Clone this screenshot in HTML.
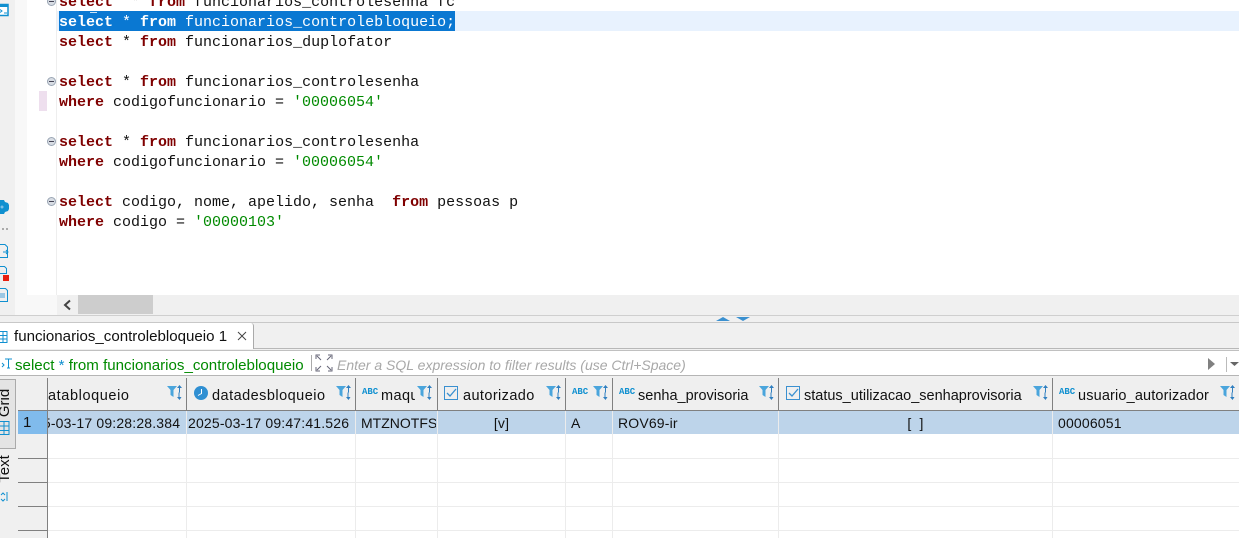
<!DOCTYPE html>
<html><head><meta charset="utf-8">
<style>
html,body{margin:0;padding:0;width:1239px;height:538px;overflow:hidden;background:#f0f0f0}
body{position:relative;font-family:"Liberation Sans",sans-serif;color:#111}
div,span.a,svg{position:absolute}
.l{position:absolute;left:59px;height:20px;font:15px/20px "Liberation Mono",monospace;white-space:pre;color:#111}
.l b{color:#7f0000;font-weight:bold}
.l i{font-style:normal;color:#008a00}
.fold{width:9px;height:9px;box-sizing:border-box;border-radius:50%;background:#d8dde4;border:1px solid #9aa6b4;left:47px}
.fold:after{content:"";position:absolute;left:1px;top:3px;width:5px;height:1px;background:#445}
.h{position:absolute;top:380px;height:31px;line-height:33px;font-size:14.5px;white-space:pre;color:#111}
.c{position:absolute;top:411px;height:23px;line-height:24px;font-size:14px;letter-spacing:.17px;white-space:pre;color:#111}
.v{position:absolute;width:1px;top:378px;height:32px;background:#808080}
.w{position:absolute;width:1px;top:411px;height:127px;background:#ececec}
.abc{position:absolute;top:388px;font:bold 9px/9px "Liberation Mono",monospace;color:#1090d0}
</style></head><body>
<div style="left:0;top:0;width:15px;height:295px;background:#f0f0f0"></div>
<div style="left:15px;top:0;width:12px;height:315px;background:#f8f8f8"></div>
<div style="left:27px;top:295px;width:30px;height:20px;background:#f8f8f8"></div>
<div style="left:27px;top:0;width:1212px;height:295px;background:#fff"></div>
<div style="left:56px;top:0;width:1px;height:295px;background:#eeeeee"></div>
<div style="left:57px;top:11px;width:1182px;height:20px;background:#e8f2fe"></div>
<div style="left:59px;top:11px;width:396px;height:20px;background:#0a78d2"></div>
<div style="left:39px;top:91px;width:8px;height:20px;background:#eedfee"></div>
<div style="left:90px;top:12px;width:7px;height:1px;background:#cfe4f6"></div>

<svg style="left:0;top:3px" width="10" height="14"><rect x="-2" y="1.500" width="10" height="11" fill="#fff" stroke="#1090d0" stroke-width="1.500"/><rect x="0" y="1" width="8" height="3" fill="#1090d0"/><path d="M0 6.500l2 1.500-2 1.500M4 10h3" fill="none" stroke="#1090d0"/></svg>
<svg style="left:0;top:199px" width="10" height="16"><path d="M-1 1h5l1 2 3 1 1 2v4l-1 2-3 1-1 2h-5z" fill="#1090d0"/><circle cx="2" cy="8" r="1.500" fill="#7cc0e8"/></svg>
<div style="left:2px;top:228px;width:2px;height:2px;background:#aaa"></div><div style="left:6px;top:228px;width:2px;height:2px;background:#aaa"></div>
<svg style="left:0;top:243px" width="10" height="60"><path d="M0 1.500h5l2.500 2.500v10.500H0M3 9h5M6 7l2 2-2 2" fill="none" stroke="#1090d0"/><path d="M0 23.500h4.500l2 2v5H0" fill="none" stroke="#1090d0"/><rect x="3" y="32" width="6" height="6" fill="#e82010"/><path d="M0 45.500h5.500l2 2v11H0" fill="none" stroke="#1090d0"/><rect x="0" y="50" width="5" height="5" fill="#9cc8e4"/></svg>

<div class="fold" style="top:-3px"></div>
<div class="fold" style="top:77px"></div>
<div class="fold" style="top:137px"></div>
<div class="fold" style="top:197px"></div>

<span class="l" style="top:-7px"><b>select</b>  * <b>from</b> funcionarios_controlesenha fc</span>
<span class="l" style="top:13px;color:#fff"><b style="color:#fff">select</b> * <b style="color:#fff">from</b> funcionarios_controlebloqueio;</span>
<span class="l" style="top:33px"><b>select</b> * <b>from</b> funcionarios_duplofator</span>
<span class="l" style="top:73px"><b>select</b> * <b>from</b> funcionarios_controlesenha</span>
<span class="l" style="top:93px"><b>where</b> codigofuncionario = <i>'00006054'</i></span>
<span class="l" style="top:133px"><b>select</b> * <b>from</b> funcionarios_controlesenha</span>
<span class="l" style="top:153px"><b>where</b> codigofuncionario = <i>'00006054'</i></span>
<span class="l" style="top:193px"><b>select</b> codigo, nome, apelido, senha  <b>from</b> pessoas p</span>
<span class="l" style="top:213px"><b>where</b> codigo = <i>'00000103'</i></span>

<div style="left:57px;top:295px;width:1182px;height:20px;background:#f0f0f0"></div>
<svg style="left:62px;top:299px" width="10" height="12"><path d="M8 1.500L3 6l5 4.500" fill="none" stroke="#444" stroke-width="2"/></svg>
<div style="left:78px;top:295px;width:75px;height:19px;background:#cdcdcd"></div>
<div style="left:0;top:315px;width:1239px;height:1px;background:#cfcfcf"></div>
<div style="left:0;top:322px;width:1239px;height:1px;background:#c8c8c8"></div>
<svg style="left:715px;top:316px" width="36" height="6"><path d="M1 5L8 1l7 4z" fill="#3a90d0"/><path d="M21 1h14l-7 4z" fill="#3a90d0"/></svg>

<div style="left:0;top:348px;width:1239px;height:1px;background:#b8b8b8"></div>
<div style="left:0;top:323px;width:254px;height:26px;background:#fff;border-right:1px solid #aaa;border-radius:0 3px 0 0;box-sizing:border-box"></div>
<svg style="left:0;top:331px" width="8" height="12"><path d="M-3 .5h10v11h-10zM-3 4.500h10M-3 8h10M3 .5v11" fill="none" stroke="#1090d0"/></svg>
<span class="a" style="left:14px;top:327px;font-size:15.100px;line-height:20px;white-space:pre;color:#111">funcionarios_controlebloqueio 1</span>
<svg style="left:236px;top:330px" width="12" height="12"><path d="M2 2l8 8M10 2l-8 8" stroke="#444" stroke-width="1"/></svg>

<div style="left:0;top:351px;width:1239px;height:24px;background:#fff"></div>
<div style="left:0;top:350px;width:1239px;height:1px;background:#c0c0c0"></div>
<div style="left:0;top:375px;width:1239px;height:1px;background:#b5b5b5"></div>
<svg style="left:0;top:357px" width="14" height="14"><path d="M2 6l2 2-2 2" fill="none" stroke="#1090d0"/><path d="M5 2h7M8.500 2v9M7 11h3" fill="none" stroke="#1090d0"/></svg>
<span class="a" style="left:15px;top:356px;font-size:15.100px;line-height:20px;white-space:pre;color:#008a00">select <span style="color:#1090d0">*</span> from funcionarios_controlebloqueio</span>
<div style="left:311px;top:355px;width:1px;height:16px;background:#aaa"></div>
<svg style="left:315px;top:354px" width="18" height="18"><path d="M1 5V1h4M13 1h4v4M1 13v4h4M17 13v4h-4M2 2l4 4M16 2l-4 4M2 16l4-4M16 16l-4-4" fill="none" stroke="#667" stroke-width="1"/></svg>
<span class="a" style="left:337px;top:355px;font-size:14px;line-height:20px;font-style:italic;white-space:pre;color:#a8a8a8">Enter a SQL expression to filter results (use Ctrl+Space)</span>
<svg style="left:1205px;top:356px" width="34" height="16"><path d="M3 2l7 6-7 6z" fill="#808080"/><rect x="21" y="1" width="1" height="15" fill="#bbb"/><path d="M25 6h9l-4.500 4z" fill="#666"/></svg>

<!-- side tabs -->
<div style="left:0;top:379px;width:16px;height:70px;background:#e4e4e4;border:1px solid #aaa;border-left:none;box-sizing:border-box"></div>
<span class="a" style="left:-11px;top:395px;transform:rotate(-90deg);font-size:15px;line-height:16px;white-space:pre;width:32px;text-align:center;color:#111">Grid</span>
<svg style="left:0;top:421px" width="10" height="15"><path d="M-1 .5h10v13h-10zM-1 5h10M-1 9.500h10M4 .5v13" fill="none" stroke="#1090d0"/></svg>
<span class="a" style="left:-11px;top:461px;transform:rotate(-90deg);font-size:15px;line-height:16px;white-space:pre;width:32px;text-align:center;color:#111">Text</span>
<svg style="left:0;top:490px" width="10" height="14"><path d="M1 5l2-2 2 2M1 9l2 2 2-2" fill="none" stroke="#1090d0"/><path d="M7 2v9" stroke="#1090d0"/></svg>

<!-- grid -->
<div style="left:18px;top:378px;width:1221px;height:33px;background:#efefef"></div>
<div style="left:18px;top:410px;width:1221px;height:1px;background:#808080"></div>
<div style="left:47px;top:411px;width:1192px;height:23px;background:#bdd4ea"></div>
<div style="left:18px;top:411px;width:29px;height:23px;background:#80bbec"></div>
<div style="left:47px;top:434px;width:1192px;height:104px;background:#fff"></div>
<div style="left:18px;top:434px;width:29px;height:104px;background:#f0f0f0"></div>
<div style="left:47px;top:458px;width:1192px;height:1px;background:#ececec"></div>
<div style="left:47px;top:482px;width:1192px;height:1px;background:#ececec"></div>
<div style="left:47px;top:506px;width:1192px;height:1px;background:#ececec"></div>
<div style="left:47px;top:530px;width:1192px;height:1px;background:#ececec"></div>
<div style="left:18px;top:458px;width:29px;height:1px;background:#808080"></div>
<div style="left:18px;top:482px;width:29px;height:1px;background:#808080"></div>
<div style="left:18px;top:506px;width:29px;height:1px;background:#808080"></div>
<div style="left:18px;top:530px;width:29px;height:1px;background:#808080"></div>
<div style="left:47px;top:378px;width:1px;height:160px;background:#808080"></div>

<div class="v" style="left:186px"></div><div class="v" style="left:355px"></div><div class="v" style="left:437px"></div><div class="v" style="left:565px"></div><div class="v" style="left:612px"></div><div class="v" style="left:778px"></div><div class="v" style="left:1052px"></div>
<div class="w" style="left:186px"></div><div class="w" style="left:355px"></div><div class="w" style="left:437px"></div><div class="w" style="left:565px"></div><div class="w" style="left:612px"></div><div class="w" style="left:778px"></div><div class="w" style="left:1052px"></div>

<span class="h" style="left:48px;letter-spacing:.6px">atabloqueio</span>
<svg style="left:194px;top:386px" width="15" height="15"><circle cx="7" cy="7" r="7" fill="#2f8fd2"/><path d="M7.500 3v4.500L4 9.500" fill="none" stroke="#fff"/></svg>
<span class="h" style="left:212px;letter-spacing:.47px">datadesbloqueio</span>
<span class="abc" style="left:362px">ABC</span><span class="h" style="left:381px;width:34px;overflow:hidden;letter-spacing:.4px">maquina</span>
<svg style="left:444px;top:386px" width="15" height="15"><rect x=".5" y=".5" width="13" height="13" fill="none" stroke="#3a90d0"/><path d="M3 7l3 3 6-7" fill="none" stroke="#3a90d0" stroke-width="1.300"/></svg>
<span class="h" style="left:463px;letter-spacing:.4px">autorizado</span>
<span class="abc" style="left:572px">ABC</span>
<span class="abc" style="left:619px">ABC</span><span class="h" style="left:638px">senha_provisoria</span>
<svg style="left:786px;top:386px" width="15" height="15"><rect x=".5" y=".5" width="13" height="13" fill="none" stroke="#3a90d0"/><path d="M3 7l3 3 6-7" fill="none" stroke="#3a90d0" stroke-width="1.300"/></svg>
<span class="h" style="left:804px">status_utilizacao_senhaprovisoria</span>
<span class="abc" style="left:1059px">ABC</span><span class="h" style="left:1078px;letter-spacing:.15px">usuario_autorizador</span>

<svg style="left:0;top:0" width="1239" height="538">
<defs><g id="ff"><path d="M0 386h10l-3.500 4v7l-3-2v-5z" fill="#4aa5dc"/><path d="M12.500 385l2.500 3h-2v4.500h-1V388h-2zM11.500 392.500h1V397h2l-2 3-2.500-3h1.500z" fill="#2f7fc0"/></g></defs>
<use href="#ff" x="167"/><use href="#ff" x="336"/><use href="#ff" x="417"/><use href="#ff" x="546"/><use href="#ff" x="593"/><use href="#ff" x="759"/><use href="#ff" x="1033"/><use href="#ff" x="1220"/>
</svg>

<span class="c" style="left:23px;font-size:15px">1</span>
<div style="left:48px;top:411px;width:138px;height:23px;overflow:hidden"><span class="c" style="left:-29px;top:0">2025-03-17 09:28:28.384</span></div>
<span class="c" style="left:188px">2025-03-17 09:47:41.526</span>
<span class="c" style="left:361px;width:75px;overflow:hidden;letter-spacing:0">MTZNOTFS</span>
<span class="c" style="left:438px;width:127px;text-align:center">[v]</span>
<span class="c" style="left:571px">A</span>
<span class="c" style="left:618px">ROV69-ir</span>
<span class="c" style="left:779px;width:273px;text-align:center">[ &nbsp;]</span>
<span class="c" style="left:1058px">00006051</span>
</body></html>
